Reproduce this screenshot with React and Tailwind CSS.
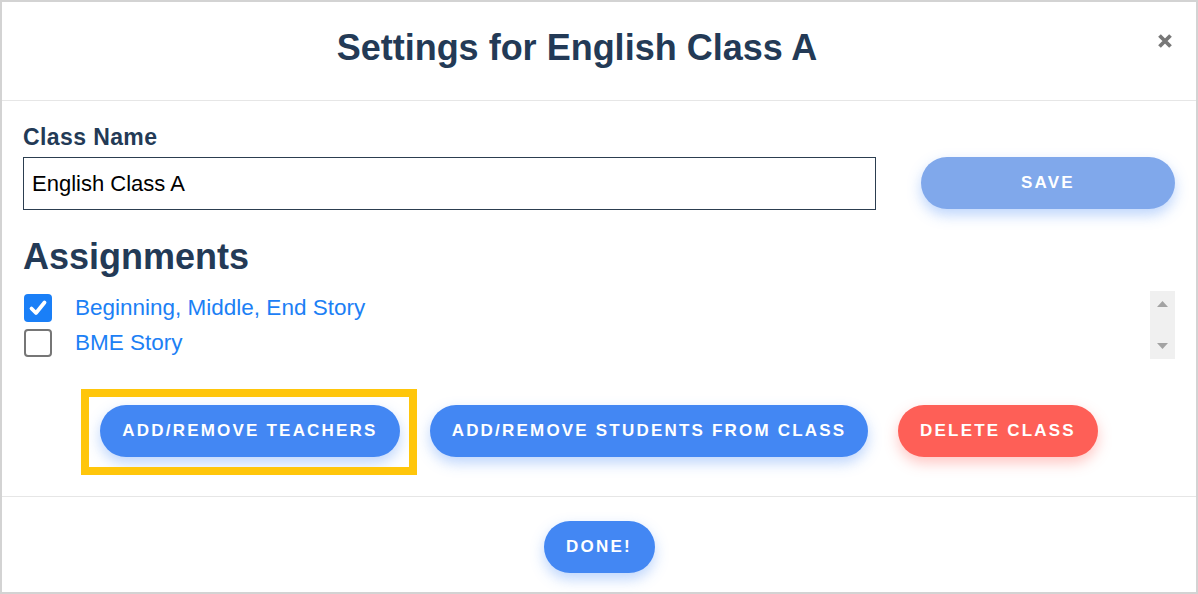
import React from "react";

const font = { fontFamily: '"Liberation Sans", Arial, sans-serif' };

function Check({ checked }) {
  if (checked) {
    return (
      <div className="w-[28px] h-[28px] rounded-[4px] bg-[#1a7ff7] flex items-center justify-center shrink-0">
        <svg width="20" height="20" viewBox="0 0 20 20">
          <path d="M3.5 10.5 L8 15 L16.5 4.5" fill="none" stroke="white" strokeWidth="3.8" strokeLinecap="round" strokeLinejoin="round" />
        </svg>
      </div>
    );
  }
  return <div className="w-[28px] h-[28px] rounded-[4px] border-[2px] border-[#767676] bg-white shrink-0" />;
}

const btnBase =
  "h-[52px] rounded-full text-white font-bold text-[17px] tracking-[2.2px] flex items-center justify-center";

export default function App() {
  return (
    <div style={font} className="w-[1198px] h-[594px] border-2 border-[#d3d3d3] bg-white flex flex-col">
      {/* header */}
      <div className="h-[99px] border-b border-[#e6e6e6] flex shrink-0">
        <div className="flex-1 flex justify-center pt-[26px]">
          <h1 className="text-[36px] leading-[40px] font-bold text-[#233a56]">
            Settings for English Class A
          </h1>
        </div>
        <div className="w-[44px] pl-[5px] pt-[31px]">
          <button className="w-[16px] h-[16px] flex items-center justify-center">
            <svg width="16" height="16" viewBox="0 0 16 16">
              <path d="M2.5 2.5 L13.5 13.5 M13.5 2.5 L2.5 13.5" stroke="#777777" strokeWidth="3.8" strokeLinecap="butt" />
            </svg>
          </button>
        </div>
      </div>

      {/* body */}
      <div className="px-[21px] pt-[24px] pb-[39px] border-b border-[#e6e6e6] shrink-0">
        <label className="block text-[23px] leading-[24px] font-bold text-[#233a56] tracking-[0.4px] mb-[8px]">
          Class Name
        </label>
        <div className="flex gap-[45px]">
          <div className="flex-1 h-[53px] border border-[#2c3e50] flex items-center pl-[8px] text-[22px] text-black">
            English Class A
          </div>
          <button className="w-[254px] h-[52px] rounded-full bg-[#80a8eb] text-white font-bold text-[17px] tracking-[2.2px] shadow-[0_6px_14px_rgba(66,135,245,0.35)] flex items-center justify-center">
            SAVE
          </button>
        </div>

        <h2 className="mt-[27px] text-[36px] leading-[40px] font-bold text-[#233a56]">
          Assignments
        </h2>

        <div className="mt-[14px] h-[68px] flex">
          <div className="flex-1 pt-[3px] pl-[1px] flex flex-col gap-[7px]">
            <div className="flex items-center gap-[23px] h-[28px]">
              <Check checked />
              <span className="text-[22.5px] leading-[28px] text-[#1c80f5]">Beginning, Middle, End Story</span>
            </div>
            <div className="flex items-center gap-[23px] h-[28px]">
              <Check checked={false} />
              <span className="text-[22.5px] leading-[28px] text-[#1c80f5]">BME Story</span>
            </div>
          </div>
          <div className="w-[25px] bg-[#f0f0f0] flex flex-col items-center justify-between py-[10px]">
            <svg width="11" height="6" viewBox="0 0 11 6">
              <path d="M5.5 0 L11 6 L0 6 Z" fill="#a3a3a3" />
            </svg>
            <svg width="11" height="6" viewBox="0 0 11 6">
              <path d="M0 0 L11 0 L5.5 6 Z" fill="#a3a3a3" />
            </svg>
          </div>
        </div>

        <div className="mt-[46px] flex justify-center gap-[30px]">
          <div className="relative">
            <button className={`${btnBase} w-[300px] bg-[#4387f3] shadow-[0_6px_14px_rgba(66,135,245,0.35)]`}>
              ADD/REMOVE TEACHERS
            </button>
            <div className="absolute left-[-19px] top-[-16px] w-[336px] h-[86px] border-[8px] border-[#ffc60b] pointer-events-none" />
          </div>
          <button className={`${btnBase} w-[438px] bg-[#4387f3] shadow-[0_6px_14px_rgba(66,135,245,0.35)]`}>
            ADD/REMOVE STUDENTS FROM CLASS
          </button>
          <button className={`${btnBase} w-[200px] bg-[#fe5f57] shadow-[0_6px_14px_rgba(254,95,87,0.35)]`}>
            DELETE CLASS
          </button>
        </div>
      </div>

      {/* footer */}
      <div className="flex justify-center pt-[24px]">
        <button className={`${btnBase} w-[111px] bg-[#4387f3] shadow-[0_6px_14px_rgba(66,135,245,0.35)]`}>
          DONE!
        </button>
      </div>
    </div>
  );
}
